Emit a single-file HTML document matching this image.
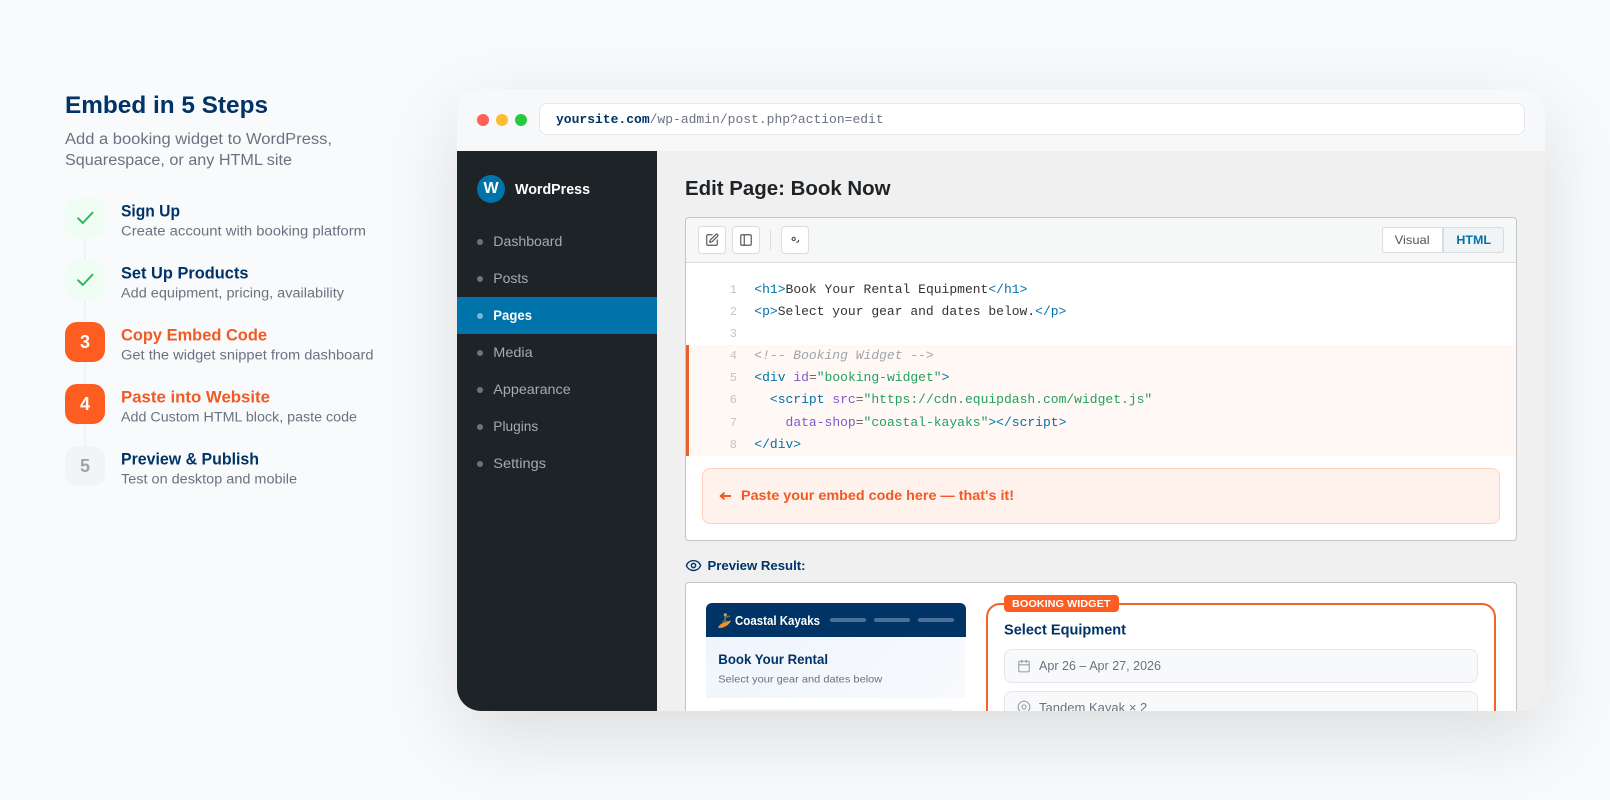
<!DOCTYPE html>
<html><head><meta charset="utf-8">
<style>
html,body{margin:0;padding:0;width:1610px;height:800px;overflow:hidden;background:#f9fafc;font-family:"Liberation Sans",sans-serif}
div{box-sizing:border-box}
.abs{position:absolute}
.ic{position:absolute;left:65px;width:40px;height:40px;border-radius:12px;display:flex;align-items:center;justify-content:center;font-weight:700;font-size:18px}
.ok{background:#f0fdf4}.on{background:#fd5d20;color:#fff}.off{background:#f3f4f6;color:#9ca3af}
.ln{position:absolute;left:84px;width:2px;height:24px;background:#f1f2f5}
#win{position:absolute;left:457px;top:89px;width:1088px;height:622px;border-radius:24px;overflow:hidden;background:#f0f0f1}
#shadow{position:absolute;left:457px;top:89px;width:1088px;height:622px;border-radius:24px;box-shadow:0 25px 80px rgba(0,0,0,.12)}
#win .p{position:absolute}
.code{position:absolute;font:13px/22.1px "Liberation Mono",monospace;white-space:pre;color:#333;left:297.3px}
.n{position:absolute;left:250px;width:30px;text-align:right;font:12px/22.1px "Liberation Mono",monospace;color:#c3c4c7}
.t{color:#0073aa}.a{color:#8257cf}.s{color:#22a05f}.c{color:#a0a5aa;font-style:italic}.e{color:#666}
.btn{position:absolute;top:137px;width:28px;height:28px;background:#fff;border:1px solid #dcdcde;border-radius:4px;display:flex;align-items:center;justify-content:center}
svg text{white-space:pre}
</style></head><body>
<div id="shadow"></div>
<div class="ln" style="top:238px"></div><div class="ln" style="top:300px"></div><div class="ln" style="top:362px"></div><div class="ln" style="top:424px"></div>
<div class="ic ok" style="top:198px"><svg width="18" height="18" viewBox="0 0 18 18" fill="none" stroke="#2eb85c" stroke-width="2" stroke-linecap="round" stroke-linejoin="round"><path d="M3.7 9.3l4.6 4.7L18 3.7" transform="translate(-1.5 0)"/></svg></div>
<div class="ic ok" style="top:260px"><svg width="18" height="18" viewBox="0 0 18 18" fill="none" stroke="#2eb85c" stroke-width="2" stroke-linecap="round" stroke-linejoin="round"><path d="M3.7 9.3l4.6 4.7L18 3.7" transform="translate(-1.5 0)"/></svg></div>
<div class="ic on" style="top:322px">3</div>
<div class="ic on" style="top:384px">4</div>
<div class="ic off" style="top:446px">5</div>
<svg class="abs" style="left:0;top:0" width="450" height="500" font-family="Liberation Sans, sans-serif">
<text x="65" y="113" font-size="24" font-weight="700" fill="#003366" textLength="203" lengthAdjust="spacingAndGlyphs">Embed in 5 Steps</text>
<text x="65" y="144" font-size="15.5" fill="#6b7280" textLength="267" lengthAdjust="spacingAndGlyphs">Add a booking widget to WordPress,</text>
<text x="65" y="165" font-size="15.5" fill="#6b7280" textLength="227" lengthAdjust="spacingAndGlyphs">Squarespace, or any HTML site</text>
<g font-size="17" font-weight="700">
<text x="121" y="216.3" fill="#003366" textLength="59" lengthAdjust="spacingAndGlyphs">Sign Up</text>
<text x="121" y="278.3" fill="#003366" textLength="127.5" lengthAdjust="spacingAndGlyphs">Set Up Products</text>
<text x="121" y="340.3" fill="#f15a22" textLength="146" lengthAdjust="spacingAndGlyphs">Copy Embed Code</text>
<text x="121" y="402.3" fill="#f15a22" textLength="149" lengthAdjust="spacingAndGlyphs">Paste into Website</text>
<text x="121" y="464.3" fill="#003366" textLength="138" lengthAdjust="spacingAndGlyphs">Preview &amp; Publish</text>
</g>
<g font-size="13.5" fill="#6b7280">
<text x="121" y="235.5" textLength="245" lengthAdjust="spacingAndGlyphs">Create account with booking platform</text>
<text x="121" y="297.5" textLength="223" lengthAdjust="spacingAndGlyphs">Add equipment, pricing, availability</text>
<text x="121" y="359.5" textLength="252.5" lengthAdjust="spacingAndGlyphs">Get the widget snippet from dashboard</text>
<text x="121" y="421.5" textLength="236" lengthAdjust="spacingAndGlyphs">Add Custom HTML block, paste code</text>
<text x="121" y="483.5" textLength="176" lengthAdjust="spacingAndGlyphs">Test on desktop and mobile</text>
</g>
</svg>

<div id="win">
  <!-- top bar -->
  <div class="p" style="left:0;top:0;width:1088px;height:62px;background:#f7f8fa"></div>
  <div class="p" style="left:20px;top:25px;width:12px;height:12px;border-radius:50%;background:#ff5f57;margin-left:0"></div>
  <div class="p" style="left:39px;top:25px;width:12px;height:12px;border-radius:50%;background:#febc2e"></div>
  <div class="p" style="left:58px;top:25px;width:12px;height:12px;border-radius:50%;background:#28c840"></div>
  <div class="p" style="left:82px;top:14px;width:985.5px;height:32px;background:#fff;border:1px solid #e5e7eb;border-radius:8px"></div>
  <div class="p" style="left:99px;top:14px;font:13px/34px 'Liberation Mono',monospace;color:#6b7280;white-space:pre"><span style="color:#003366;font-weight:700">yoursite.com</span>/wp-admin/post.php?action=edit</div>
  <!-- sidebar -->
  <div class="p" style="left:0;top:62px;width:200px;height:560px;background:#1d2327"></div>
  <div class="p" style="left:0;top:208px;width:200px;height:37px;background:#0073aa"></div>
  <div class="p" style="left:20px;top:86px;width:28px;height:28px;border-radius:50%;background:#0073aa;color:#fff;font-weight:700;font-size:16px;line-height:28px;text-align:center">W</div>
  <div class="p" style="left:20px;top:149.5px;width:6px;height:6px;border-radius:50%;background:#6f7377"></div>
  <div class="p" style="left:20px;top:186.5px;width:6px;height:6px;border-radius:50%;background:#6f7377"></div>
  <div class="p" style="left:20px;top:223.5px;width:6px;height:6px;border-radius:50%;background:#72b8d8"></div>
  <div class="p" style="left:20px;top:260.5px;width:6px;height:6px;border-radius:50%;background:#6f7377"></div>
  <div class="p" style="left:20px;top:297.5px;width:6px;height:6px;border-radius:50%;background:#6f7377"></div>
  <div class="p" style="left:20px;top:334.5px;width:6px;height:6px;border-radius:50%;background:#6f7377"></div>
  <div class="p" style="left:20px;top:371.5px;width:6px;height:6px;border-radius:50%;background:#6f7377"></div>
  <!-- editor -->
  <div class="p" style="left:228px;top:128px;width:832px;height:324px;background:#fff;border:1px solid #c3c4c7;border-radius:4px"></div>
  <div class="p" style="left:229px;top:129px;width:830px;height:45px;background:#f6f7f7;border-bottom:1px solid #dcdcde;border-radius:3px 3px 0 0"></div>
  <div class="btn" style="left:241px"><svg width="14" height="14" viewBox="0 0 24 24" fill="none" stroke="#50575e" stroke-width="2" stroke-linecap="round" stroke-linejoin="round"><path d="M12 3H5a2 2 0 0 0-2 2v14a2 2 0 0 0 2 2h14a2 2 0 0 0 2-2v-7"/><path d="M18.375 2.625a1 1 0 0 1 3 3l-9.013 9.014a2 2 0 0 1-.853.505l-2.873.84a.5.5 0 0 1-.62-.62l.84-2.873a2 2 0 0 1 .506-.852z"/></svg></div>
  <div class="btn" style="left:275px"><svg width="14" height="14" viewBox="0 0 24 24" fill="none" stroke="#50575e" stroke-width="2" stroke-linecap="round" stroke-linejoin="round"><rect x="3" y="3" width="18" height="18" rx="2"/><path d="M9 3v18"/></svg></div>
  <div class="p" style="left:313px;top:141px;width:1px;height:20px;background:#dcdcde"></div>
  <div class="btn" style="left:324px"><svg width="14" height="14" viewBox="0 0 14 14" fill="none" stroke="#50575e" stroke-width="1.2" stroke-linecap="round"><circle cx="5.7" cy="6" r="1.6"/><path d="M10.6 7.4c0 1.2-.6 1.8-1.8 1.8"/></svg></div>
  <div class="p" style="left:925px;top:138px;width:61px;height:26px;background:#fff;border:1px solid #dcdcde;border-radius:3px 0 0 3px"></div>
  <div class="p" style="left:985.5px;top:138px;width:61px;height:26px;background:#f0f4f6;border:1px solid #dcdcde;border-radius:0 3px 3px 0"></div>
  <!-- code -->
  <div class="p" style="left:229px;top:256px;width:830px;height:111px;background:#fff8f4;border-left:3px solid #e8602c"></div>
  <div class="n" style="top:190px">1</div><div class="code" style="top:190px"><span class="t">&lt;h1&gt;</span>Book Your Rental Equipment<span class="t">&lt;/h1&gt;</span></div>
  <div class="n" style="top:212px">2</div><div class="code" style="top:212px"><span class="t">&lt;p&gt;</span>Select your gear and dates below.<span class="t">&lt;/p&gt;</span></div>
  <div class="n" style="top:234px">3</div>
  <div class="n" style="top:256px">4</div><div class="code" style="top:256px"><span class="c">&lt;!-- Booking Widget --&gt;</span></div>
  <div class="n" style="top:278px">5</div><div class="code" style="top:278px"><span class="t">&lt;div</span> <span class="a">id</span><span class="e">=</span><span class="s">"booking-widget"</span><span class="t">&gt;</span></div>
  <div class="n" style="top:300px">6</div><div class="code" style="top:300px">  <span class="t">&lt;script</span> <span class="a">src</span><span class="e">=</span><span class="s">"https://cdn.equipdash.com/widget.js"</span></div>
  <div class="n" style="top:322.5px">7</div><div class="code" style="top:322.5px">    <span class="a">data-shop</span><span class="e">=</span><span class="s">"coastal-kayaks"</span><span class="t">&gt;&lt;/script&gt;</span></div>
  <div class="n" style="top:344.5px">8</div><div class="code" style="top:344.5px"><span class="t">&lt;/div&gt;</span></div>
  <!-- hint -->
  <div class="p" style="left:245px;top:379px;width:798px;height:55.5px;background:#fff1ec;border:1px solid #fdd0bf;border-radius:8px"></div>
  <svg class="p" style="left:262px;top:402px" width="13" height="10" viewBox="0 0 13 10" fill="none" stroke="#f15a22" stroke-width="2"><path d="M12 5H3M5.5 1.8L1.8 5l3.7 3.2" stroke-linejoin="miter"/></svg>
  <!-- preview -->
  <svg class="p" style="left:227.5px;top:467.5px" width="17" height="17" viewBox="0 0 24 24" fill="none" stroke="#003366" stroke-width="2" stroke-linecap="round" stroke-linejoin="round"><path d="M2.062 12.348a1 1 0 0 1 0-.696 10.75 10.75 0 0 1 19.876 0 1 1 0 0 1 0 .696 10.75 10.75 0 0 1-19.876 0"/><circle cx="12" cy="12" r="3"/></svg>
  <div class="p" style="left:228px;top:493px;width:832px;height:140px;background:#fff;border:1px solid #c3c4c7;border-radius:4px"></div>
  <div class="p" style="left:249px;top:514px;width:260px;height:34px;background:#003366;border-radius:6px 6px 0 0"></div>
  <div class="p" style="left:373px;top:529px;width:36px;height:4px;border-radius:2px;background:#4d7099"></div>
  <div class="p" style="left:417px;top:529px;width:36px;height:4px;border-radius:2px;background:#4d7099"></div>
  <div class="p" style="left:461px;top:529px;width:36px;height:4px;border-radius:2px;background:#4d7099"></div>
  <svg class="p" style="left:260px;top:523px" width="16" height="17" viewBox="0 0 16 17"><path d="M1 15.5C3 11 9 9.5 14 8.5 13 12 8 16 2.5 16z" fill="#f0902e"/><circle cx="8.3" cy="2.8" r="1.6" fill="#c9a57a"/><path d="M7 4.5l3 .5 3-1M8.5 5l-.5 3 2 2M8 8l-2.5 2.5" stroke="#5d7a50" stroke-width="1.5" fill="none"/></svg>
  <div class="p" style="left:249px;top:548px;width:259px;height:61px;background:linear-gradient(135deg,#eff5fc,#f8fafd)"></div>
  <div class="p" style="left:263px;top:620px;width:232px;height:10px;background:#f1f2f4"></div>
  <div class="p" style="left:529px;top:514px;width:510px;height:130px;border:2px solid #f0622a;border-radius:14px;background:#fff"></div>
  <div class="p" style="left:547px;top:506px;width:114.5px;height:16.7px;background:#fd5d20;border-radius:4px"></div>
  <div class="p" style="left:547px;top:560px;width:474px;height:33.7px;background:#f8f9fb;border:1px solid #e5e7eb;border-radius:8px"></div>
  <div class="p" style="left:547px;top:602px;width:474px;height:34px;background:#f8f9fb;border:1px solid #e5e7eb;border-radius:8px"></div>
  <svg class="p" style="left:560px;top:570px" width="14" height="14" viewBox="0 0 24 24" fill="none" stroke="#9ca3af" stroke-width="2" stroke-linecap="round" stroke-linejoin="round"><rect x="3" y="4" width="18" height="18" rx="2"/><path d="M16 2v4M8 2v4M3 10h18"/></svg>
  <svg class="p" style="left:560px;top:610.5px" width="14" height="14" viewBox="0 0 24 24" fill="none" stroke="#9ca3af" stroke-width="2"><circle cx="12" cy="12" r="10"/><circle cx="12" cy="12" r="3.5"/></svg>
  <!-- text layer in page coordinates -->
  <svg class="p" style="left:-457px;top:-89px" width="1610" height="800" font-family="Liberation Sans, sans-serif">
    <text x="515" y="194" font-size="14.5" font-weight="700" fill="#fff" textLength="75" lengthAdjust="spacingAndGlyphs">WordPress</text>
    <g font-size="14" fill="#a7aaad">
      <text x="493.3" y="246" textLength="69" lengthAdjust="spacingAndGlyphs">Dashboard</text>
      <text x="493.3" y="283" textLength="35" lengthAdjust="spacingAndGlyphs">Posts</text>
      <text x="493.3" y="320" textLength="38.7" fill="#fff" font-weight="700" lengthAdjust="spacingAndGlyphs">Pages</text>
      <text x="493.3" y="357" textLength="39.4" lengthAdjust="spacingAndGlyphs">Media</text>
      <text x="493.3" y="394" textLength="77.4" lengthAdjust="spacingAndGlyphs">Appearance</text>
      <text x="493.3" y="431" textLength="45" lengthAdjust="spacingAndGlyphs">Plugins</text>
      <text x="493.3" y="468" textLength="52.7" lengthAdjust="spacingAndGlyphs">Settings</text>
    </g>
    <text x="685" y="195" font-size="20" font-weight="700" fill="#1d2327" textLength="205.5" lengthAdjust="spacingAndGlyphs">Edit Page: Book Now</text>
    <text x="1394.6" y="244" font-size="12" fill="#50575e" textLength="35" lengthAdjust="spacingAndGlyphs">Visual</text>
    <text x="1456.4" y="244" font-size="12" font-weight="700" fill="#0073aa" textLength="34.6" lengthAdjust="spacingAndGlyphs">HTML</text>
    <text x="741" y="500" font-size="14" font-weight="700" fill="#f15a22" textLength="273" lengthAdjust="spacingAndGlyphs">Paste your embed code here — that's it!</text>
    <text x="707.5" y="570" font-size="13" font-weight="700" fill="#003366" textLength="98" lengthAdjust="spacingAndGlyphs">Preview Result:</text>
    <text x="735" y="625" font-size="12.5" font-weight="700" fill="#fff" textLength="85" lengthAdjust="spacingAndGlyphs">Coastal Kayaks</text>
    <text x="718.3" y="664" font-size="14" font-weight="700" fill="#003366" textLength="109.7" lengthAdjust="spacingAndGlyphs">Book Your Rental</text>
    <text x="718.3" y="682.3" font-size="10.5" fill="#6b7280" textLength="164" lengthAdjust="spacingAndGlyphs">Select your gear and dates below</text>
    <text x="1012" y="607" font-size="10" font-weight="700" fill="#fff" textLength="98.5" lengthAdjust="spacingAndGlyphs">BOOKING WIDGET</text>
    <text x="1004" y="634.3" font-size="15" font-weight="700" fill="#003366" textLength="122" lengthAdjust="spacingAndGlyphs">Select Equipment</text>
    <text x="1039" y="670" font-size="13" fill="#6b7280" textLength="122" lengthAdjust="spacingAndGlyphs">Apr 26 – Apr 27, 2026</text>
    <text x="1039" y="712" font-size="13" fill="#6b7280" textLength="108.3" lengthAdjust="spacingAndGlyphs">Tandem Kayak × 2</text>
  </svg>
</div>
</body></html>
